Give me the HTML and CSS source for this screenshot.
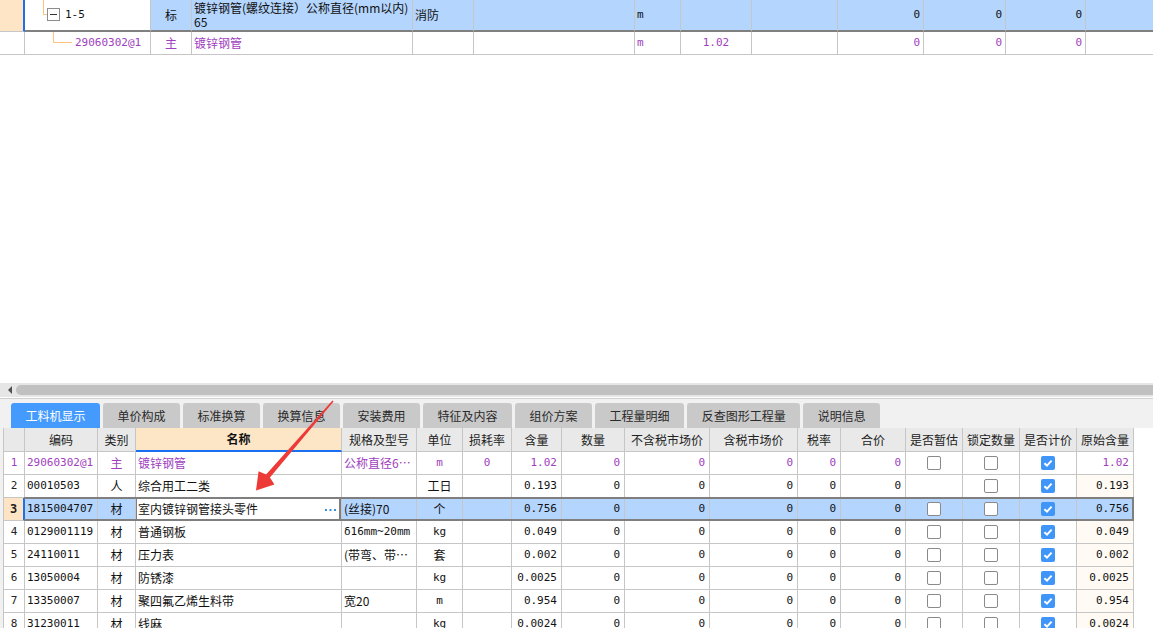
FILE: index.html
```html
<!DOCTYPE html>
<html lang="zh-CN">
<head>
<meta charset="utf-8">
<title>工料机显示</title>
<link rel="stylesheet" href="styles.css">
</head>
<body>
<div class="app">
  <div class="top-pane">
    <div class="tg-row r1">
      <div class="c cur"></div>
      <div class="c tree">
        <svg class="tree-svg" width="36" height="30" viewBox="0 0 36 30">
          <path d="M18.5 0 V14.5 H22.5" fill="none" stroke="#ffc27a" stroke-width="1"/>
          <rect x="22.5" y="8.5" width="12" height="12" fill="#fff" stroke="#8c8c8c"/>
          <path d="M25 14.5 H32" stroke="#333" stroke-width="1"/>
        </svg>
        <span class="tree-txt a">1-5</span>
      </div>
      <div class="c ctr">标</div>
      <div class="c multi"><span class="ln">镀锌钢管(螺纹连接）公称直径(mm以内)</span><span class="ln">65</span></div>
      <div class="c">消防</div>
      <div class="c"></div>
      <div class="c a">m</div>
      <div class="c"></div>
      <div class="c"></div>
      <div class="c num">0</div>
      <div class="c num">0</div>
      <div class="c num">0</div>
      <div class="c"></div>
    </div>
    <div class="tg-row r2">
      <div class="c"></div>
      <div class="c tree">
        <svg class="tree-svg" width="48" height="22" viewBox="0 0 48 22">
          <path d="M28.5 0 V10.5 H47" fill="none" stroke="#ffc27a" stroke-width="1"/>
        </svg>
        <span class="code a">29060302@1</span>
      </div>
      <div class="c ctr">主</div>
      <div class="c">镀锌钢管</div>
      <div class="c"></div>
      <div class="c"></div>
      <div class="c a">m</div>
      <div class="c ctr a">1.02</div>
      <div class="c"></div>
      <div class="c num">0</div>
      <div class="c num">0</div>
      <div class="c num">0</div>
      <div class="c"></div>
    </div>
  </div>

  <div class="hscroll"><span class="sc-arrow"></span><div class="sc-thumb"></div></div>
  <div class="sep"></div>

  <div class="tabstrip">
    <div class="tab active">工料机显示</div>
    <div class="tab">单价构成</div>
    <div class="tab">标准换算</div>
    <div class="tab">换算信息</div>
    <div class="tab">安装费用</div>
    <div class="tab">特征及内容</div>
    <div class="tab">组价方案</div>
    <div class="tab">工程量明细</div>
    <div class="tab">反查图形工程量</div>
    <div class="tab">说明信息</div>
  </div>

  <div class="bottom">
    <div class="grid">
      <div class="gr head">
        <div class="g"></div>
        <div class="g">编码</div>
        <div class="g">类别</div>
        <div class="g namehead">名称</div>
        <div class="g">规格及型号</div>
        <div class="g">单位</div>
        <div class="g">损耗率</div>
        <div class="g">含量</div>
        <div class="g">数量</div>
        <div class="g">不含税市场价</div>
        <div class="g">含税市场价</div>
        <div class="g">税率</div>
        <div class="g">合价</div>
        <div class="g">是否暂估</div>
        <div class="g">锁定数量</div>
        <div class="g">是否计价</div>
        <div class="g">原始含量</div>
      </div>

      <div class="gr main">
        <div class="g rn">1</div>
        <div class="g a">29060302@1</div>
        <div class="g ctr">主</div>
        <div class="g">镀锌钢管</div>
        <div class="g">公称直径6…</div>
        <div class="g ctr a">m</div>
        <div class="g ctr a">0</div>
        <div class="g num">1.02</div>
        <div class="g num">0</div>
        <div class="g num">0</div>
        <div class="g num">0</div>
        <div class="g num">0</div>
        <div class="g num">0</div>
        <div class="g ctr"><span class="cb"></span></div>
        <div class="g ctr"><span class="cb"></span></div>
        <div class="g ctr"><span class="cb on"><svg width="14" height="14" viewBox="0 0 14 14"><path d="M3.4 7.2 L6 9.6 L10.6 4.6" fill="none" stroke="#fff" stroke-width="2"/></svg></span></div>
        <div class="g num">1.02</div>
      </div>

      <div class="gr">
        <div class="g rn">2</div>
        <div class="g a">00010503</div>
        <div class="g ctr">人</div>
        <div class="g">综合用工二类</div>
        <div class="g"></div>
        <div class="g ctr">工日</div>
        <div class="g"></div>
        <div class="g num">0.193</div>
        <div class="g num">0</div>
        <div class="g num">0</div>
        <div class="g num">0</div>
        <div class="g num">0</div>
        <div class="g num">0</div>
        <div class="g"></div>
        <div class="g ctr"><span class="cb"></span></div>
        <div class="g ctr"><span class="cb on"><svg width="14" height="14" viewBox="0 0 14 14"><path d="M3.4 7.2 L6 9.6 L10.6 4.6" fill="none" stroke="#fff" stroke-width="2"/></svg></span></div>
        <div class="g num orig">0.193</div>
      </div>

      <div class="gr sel">
        <div class="g rn curn">3</div>
        <div class="g a">1815004707</div>
        <div class="g ctr">材</div>
        <div class="g edit"><span>室内镀锌钢管接头零件</span><svg class="more" width="11" height="2" viewBox="0 0 11 2"><rect x="0" y="0" width="2" height="2" fill="#3c8ee0"/><rect x="4.5" y="0" width="2" height="2" fill="#3c8ee0"/><rect x="9" y="0" width="2" height="2" fill="#3c8ee0"/></svg></div>
        <div class="g">(丝接)70</div>
        <div class="g ctr">个</div>
        <div class="g"></div>
        <div class="g num">0.756</div>
        <div class="g num">0</div>
        <div class="g num">0</div>
        <div class="g num">0</div>
        <div class="g num">0</div>
        <div class="g num">0</div>
        <div class="g ctr"><span class="cb"></span></div>
        <div class="g ctr"><span class="cb"></span></div>
        <div class="g ctr"><span class="cb on"><svg width="14" height="14" viewBox="0 0 14 14"><path d="M3.4 7.2 L6 9.6 L10.6 4.6" fill="none" stroke="#fff" stroke-width="2"/></svg></span></div>
        <div class="g num">0.756</div>
      </div>

      <div class="gr">
        <div class="g rn">4</div>
        <div class="g a">0129001119</div>
        <div class="g ctr">材</div>
        <div class="g">普通钢板</div>
        <div class="g a">δ16mm~20mm</div>
        <div class="g ctr a">kg</div>
        <div class="g"></div>
        <div class="g num">0.049</div>
        <div class="g num">0</div>
        <div class="g num">0</div>
        <div class="g num">0</div>
        <div class="g num">0</div>
        <div class="g num">0</div>
        <div class="g ctr"><span class="cb"></span></div>
        <div class="g ctr"><span class="cb"></span></div>
        <div class="g ctr"><span class="cb on"><svg width="14" height="14" viewBox="0 0 14 14"><path d="M3.4 7.2 L6 9.6 L10.6 4.6" fill="none" stroke="#fff" stroke-width="2"/></svg></span></div>
        <div class="g num orig">0.049</div>
      </div>

      <div class="gr">
        <div class="g rn">5</div>
        <div class="g a">24110011</div>
        <div class="g ctr">材</div>
        <div class="g">压力表</div>
        <div class="g">(带弯、带…</div>
        <div class="g ctr">套</div>
        <div class="g"></div>
        <div class="g num">0.002</div>
        <div class="g num">0</div>
        <div class="g num">0</div>
        <div class="g num">0</div>
        <div class="g num">0</div>
        <div class="g num">0</div>
        <div class="g ctr"><span class="cb"></span></div>
        <div class="g ctr"><span class="cb"></span></div>
        <div class="g ctr"><span class="cb on"><svg width="14" height="14" viewBox="0 0 14 14"><path d="M3.4 7.2 L6 9.6 L10.6 4.6" fill="none" stroke="#fff" stroke-width="2"/></svg></span></div>
        <div class="g num orig">0.002</div>
      </div>

      <div class="gr">
        <div class="g rn">6</div>
        <div class="g a">13050004</div>
        <div class="g ctr">材</div>
        <div class="g">防锈漆</div>
        <div class="g"></div>
        <div class="g ctr a">kg</div>
        <div class="g"></div>
        <div class="g num">0.0025</div>
        <div class="g num">0</div>
        <div class="g num">0</div>
        <div class="g num">0</div>
        <div class="g num">0</div>
        <div class="g num">0</div>
        <div class="g ctr"><span class="cb"></span></div>
        <div class="g ctr"><span class="cb"></span></div>
        <div class="g ctr"><span class="cb on"><svg width="14" height="14" viewBox="0 0 14 14"><path d="M3.4 7.2 L6 9.6 L10.6 4.6" fill="none" stroke="#fff" stroke-width="2"/></svg></span></div>
        <div class="g num orig">0.0025</div>
      </div>

      <div class="gr">
        <div class="g rn">7</div>
        <div class="g a">13350007</div>
        <div class="g ctr">材</div>
        <div class="g">聚四氟乙烯生料带</div>
        <div class="g">宽20</div>
        <div class="g ctr a">m</div>
        <div class="g"></div>
        <div class="g num">0.954</div>
        <div class="g num">0</div>
        <div class="g num">0</div>
        <div class="g num">0</div>
        <div class="g num">0</div>
        <div class="g num">0</div>
        <div class="g ctr"><span class="cb"></span></div>
        <div class="g ctr"><span class="cb"></span></div>
        <div class="g ctr"><span class="cb on"><svg width="14" height="14" viewBox="0 0 14 14"><path d="M3.4 7.2 L6 9.6 L10.6 4.6" fill="none" stroke="#fff" stroke-width="2"/></svg></span></div>
        <div class="g num orig">0.954</div>
      </div>

      <div class="gr">
        <div class="g rn">8</div>
        <div class="g a">31230011</div>
        <div class="g ctr">材</div>
        <div class="g">线麻</div>
        <div class="g"></div>
        <div class="g ctr a">kg</div>
        <div class="g"></div>
        <div class="g num">0.0024</div>
        <div class="g num">0</div>
        <div class="g num">0</div>
        <div class="g num">0</div>
        <div class="g num">0</div>
        <div class="g num">0</div>
        <div class="g ctr"><span class="cb"></span></div>
        <div class="g ctr"><span class="cb"></span></div>
        <div class="g ctr"><span class="cb on"><svg width="14" height="14" viewBox="0 0 14 14"><path d="M3.4 7.2 L6 9.6 L10.6 4.6" fill="none" stroke="#fff" stroke-width="2"/></svg></span></div>
        <div class="g num orig">0.0024</div>
      </div>
    </div>
  </div>

  <svg class="annot" width="1153" height="628" viewBox="0 0 1153 628">
    <polygon points="332.4,400.5 333.6,401.5 269.9,477.6 274.4,484.6 256,490.5 258.6,471.2 266.1,474.4" fill="#ee3a36"/>
  </svg>
</div>
</body>
</html>
```

FILE: styles.css
```css
* { box-sizing: border-box; }

html, body {
  margin: 0;
  padding: 0;
  background: #fff;
}

body {
  font-family: "Noto Sans CJK SC", "Noto Sans", sans-serif;
  font-size: 12px;
  color: #111;
}

.app {
  position: relative;
  width: 1153px;
  height: 628px;
  overflow: hidden;
  display: flex;
  flex-direction: column;
}

/* ASCII / numeric text: fixed-width like the original grid font */
.a,
.num,
.rn {
  font-family: "DejaVu Sans Mono", "Liberation Mono", monospace;
  font-size: 11px;
}

/* ---------- top tree grid ---------- */
.top-pane {
  height: 383px;
  flex: none;
  background: #fff;
}

.tg-row {
  display: grid;
  grid-template-columns: 25px 126px 41px 221px 61px 161px 46px 71px 86px 86px 82px 80px 1fr;
}

.tg-row .c {
  border-right: 1px solid #c6c6c6;
  border-bottom: 1px solid #c6c6c6;
  display: flex;
  align-items: center;
  padding: 0 2px;
  white-space: nowrap;
  overflow: hidden;
  line-height: 14px;
}

.tg-row .c:last-child { border-right: none; }

.tg-row .ctr { justify-content: center; }
.tg-row .num { justify-content: flex-end; padding-right: 3px; }

.r1 { height: 32px; }
.r1 .c {
  background: #b4d5fe;
  border-bottom: 2px solid #808080;
}
.r1 .c.cur {
  background: #fde5c6;
  border-right: 2px solid #1e6fe8;
  border-bottom: 1px solid #c6c6c6;
}
.r1 .c.tree { background: #fff; }

.r2 { height: 23px; color: #a040c0; }
.r2 .c { background: #fff; }

.tg-row .tree { padding: 0; }
.tree-svg { display: block; flex: none; }
.tree-txt { margin-left: 4px; color: #111; }
.code { margin-left: 2px; }

.tg-row .multi {
  flex-direction: column;
  align-items: flex-start;
  justify-content: flex-start;
  padding-top: 1px;
}
.multi .ln {
  display: block;
  height: 13.5px;
  line-height: 13.5px;
}

/* ---------- horizontal scrollbar ---------- */
.hscroll {
  height: 14px;
  flex: none;
  background: #e6e6e6;
  display: flex;
  align-items: center;
  padding-left: 8px;
}

.sc-arrow {
  width: 0;
  height: 0;
  border-top: 4px solid transparent;
  border-bottom: 4px solid transparent;
  border-right: 4px solid #505050;
}

.sc-thumb {
  flex: 1;
  height: 10px;
  margin-left: 4px;
  background: #c0c0c0;
  border-radius: 5px 0 0 5px;
}

.sep {
  height: 2px;
  flex: none;
  background: #fff;
  border-bottom: 1px solid #cfcfcf;
}

/* ---------- tabs ---------- */
.tabstrip {
  height: 29px;
  flex: none;
  background: #f1f1f1;
  padding: 4px 0 0 11px;
  display: flex;
  gap: 3px;
}

.tab {
  height: 25px;
  padding: 0 14.5px;
  background: #c9c9c9;
  color: #2a2a2a;
  border-radius: 3px 3px 0 0;
  display: flex;
  align-items: center;
  font-size: 12px;
  white-space: nowrap;
}

.tab.active {
  background: #459bfd;
  color: #fff;
}

/* ---------- bottom grid ---------- */
.bottom {
  flex: 1;
  display: flex;
  background: #fff;
  border-left: 3px solid #f1f1f1;
}

.grid {
  width: 1131px;
  border-left: 1px solid #c6c6c6;
}

.gr {
  display: grid;
  grid-template-columns: 21px 73px 38px 206px 75px 46px 49px 50px 63px 85px 88px 43px 65px 57px 57px 57px 57px;
  height: 23px;
}

.gr .g {
  border-right: 1px solid #c6c6c6;
  border-bottom: 1px solid #c6c6c6;
  display: flex;
  align-items: center;
  padding: 0 2px;
  white-space: nowrap;
  overflow: hidden;
  line-height: 14px;
  background: #fff;
}

.gr .ctr { justify-content: center; }
.gr .num { justify-content: flex-end; padding-right: 4px; }
.gr .rn { justify-content: center; padding: 0; color: #222; }
.gr .orig { background: #fffaf4; }

.gr.head { height: 24px; }
.gr.head .g {
  background: #e9e9e9;
  justify-content: center;
  color: #222;
  padding: 0;
}
.gr.head .namehead {
  background: #fde6c6;
  font-weight: bold;
  border-bottom: 2px solid #1a6ff0;
  color: #111;
}

.gr.main .g { color: #a040c0; }

.gr.sel { position: relative; }
.gr.sel .g { background: #b4d5fe; }
.gr.sel .curn {
  background: #fde4c4;
  font-weight: bold;
  font-size: 12px;
  border-right: 2px solid #1e6fe8;
}
.gr.sel::after {
  content: "";
  position: absolute;
  left: 20px;
  right: 0;
  top: -1px;
  bottom: 0;
  border-top: 2px solid #7f7f7f;
  border-bottom: 2px solid #7f7f7f;
  border-right: 2px solid #7f7f7f;
  pointer-events: none;
}

.gr.sel .edit {
  position: relative;
  background: #fff;
  justify-content: space-between;
  padding-right: 5px;
}
.gr.sel .edit::after {
  content: "";
  position: absolute;
  left: -1px;
  right: 0;
  top: -1px;
  bottom: 0;
  border-left: 2px solid #7f7f7f;
  border-right: 2px solid #7f7f7f;
  pointer-events: none;
}
.more {
  display: block;
  flex: none;
  margin-top: 1px;
}

/* checkboxes */
.cb {
  width: 14px;
  height: 14px;
  border: 1px solid #8a8a8a;
  border-radius: 2px;
  background: #fff;
  display: block;
}
.cb.on {
  border: none;
  background: #3f95f8;
}
.cb.on svg { display: block; }

/* annotation arrow */
.annot {
  position: absolute;
  left: 0;
  top: 0;
  pointer-events: none;
}
```
